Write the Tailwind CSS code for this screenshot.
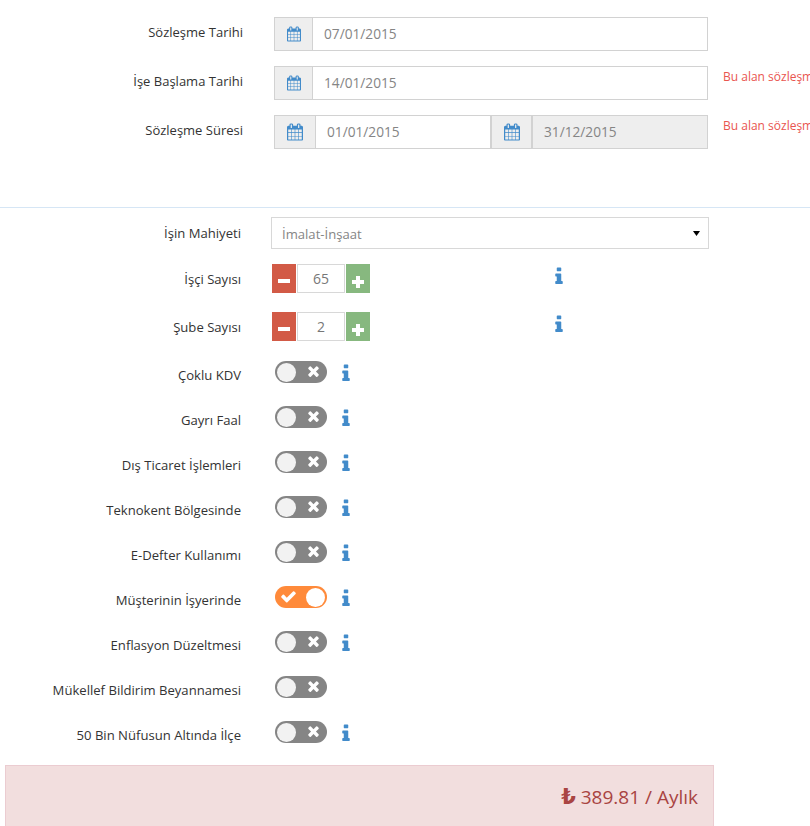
<!DOCTYPE html>
<html lang="tr">
<head>
    <meta charset="UTF-8">
    <title>Sözleşme</title>
    <script src="https://cdn.jsdelivr.net/npm/@tailwindcss/browser@4"></script>
</head>
<body class="bg-white overflow-hidden h-[826px] font-['Open_Sans',sans-serif] text-[13px] text-[#333]">
    <svg class="hidden">
        <symbol id="cal" viewBox="0 0 1664 1792"><path d="M128 1664h288v-288h-288v288zm352 0h320v-288h-320v288zm-352-352h288v-320h-288v320zm352 0h320v-320h-320v320zm-352-384h288v-288h-288v288zm736 736h320v-288h-320v288zm-384-736h320v-288h-320v288zm768 736h288v-288h-288v288zm-384-352h320v-320h-320v320zm-352-864v-288q0-13-9.5-22.5t-22.5-9.5h-64q-13 0-22.5 9.5t-9.5 22.5v288q0 13 9.5 22.5t22.5 9.5h64q13 0 22.5-9.5t9.5-22.5zm736 864h288v-320h-288v320zm-384-384h320v-288h-320v288zm384 0h288v-288h-288v288zm32-480v-288q0-13-9.5-22.5t-22.5-9.5h-64q-13 0-22.5 9.5t-9.5 22.5v288q0 13 9.5 22.5t22.5 9.5h64q13 0 22.5-9.5t9.5-22.5zm384-64v1280q0 52-38 90t-90 38h-1408q-52 0-90-38t-38-90v-1280q0-52 38-90t90-38h128v-96q0-66 47-113t113-47h64q66 0 113 47t47 113v96h384v-96q0-66 47-113t113-47h64q66 0 113 47t47 113v96h128q52 0 90 38t38 90z"/></symbol>
        <symbol id="info" viewBox="0 0 640 1792"><path d="M640 1344v128q0 26-19 45t-45 19h-512q-26 0-45-19t-19-45v-128q0-26 19-45t45-19h64v-384h-64q-26 0-45-19t-19-45v-128q0-26 19-45t45-19h384q26 0 45 19t19 45v576h64q26 0 45 19t19 45zm-128-1152v192q0 26-19 45t-45 19h-256q-26 0-45-19t-19-45v-192q0-26 19-45t45-19h256q26 0 45 19t19 45z"/></symbol>
        <symbol id="check" viewBox="0 0 1792 1792"><path d="M1671 566q0 40-28 68l-724 724-136 136q-28 28-68 28t-68-28l-136-136-362-362q-28-28-28-68t28-68l136-136q28-28 68-28t68 28l294 295 656-657q28-28 68-28t68 28l136 136q28 28 28 68z"/></symbol>
        <symbol id="times" viewBox="0 0 1408 1792"><path d="M1298 1322q0 40-28 68l-136 136q-28 28-68 28t-68-28l-294-294-294 294q-28 28-68 28t-68-28l-136-136q-28-28-28-68t28-68l294-294-294-294q-28-28-28-68t28-68l136-136q28-28 68-28t68 28l294 294 294-294q28-28 68-28t68 28l136 136q28 28 28 68t-28 68l-294 294 294 294q28 28 28 68z"/></symbol>
    </svg>

    <!-- Tarih alanlari -->
    <div class="flex flex-col gap-[15px] pt-[17px] h-[207px]">
        <div class="flex h-[34px]">
            <div class="w-[243px] shrink-0 text-right pt-[6px] whitespace-nowrap">Sözleşme Tarihi</div>
            <div class="ml-[31px] w-[434px] shrink-0 flex border border-[#d2d2d2] h-[34px] bg-white text-[#858585]">
                <span class="w-[38px] bg-[#eeeeee] border-r border-[#d2d2d2] flex items-center justify-center"><svg class="w-[14px] h-[16px] fill-[#428bca]"><use href="#cal"/></svg></span>
                <span class="pl-[11px] pt-[6px] text-[13.7px] leading-[20px]">07/01/2015</span>
            </div>
        </div>
        <div class="flex h-[34px]">
            <div class="w-[243px] shrink-0 text-right pt-[6px] whitespace-nowrap">İşe Başlama Tarihi</div>
            <div class="ml-[31px] w-[434px] shrink-0 flex border border-[#d2d2d2] h-[34px] bg-white text-[#858585]">
                <span class="w-[38px] bg-[#eeeeee] border-r border-[#d2d2d2] flex items-center justify-center"><svg class="w-[14px] h-[16px] fill-[#428bca]"><use href="#cal"/></svg></span>
                <span class="pl-[11px] pt-[6px] text-[13.7px] leading-[20px]">14/01/2015</span>
            </div>
            <div class="ml-[15px] pt-[1px] text-[12px] leading-[20px] text-[#e9554f] whitespace-nowrap">Bu alan sözleşme tarihinden büyük olmalıdır</div>
        </div>
        <div class="flex h-[34px]">
            <div class="w-[243px] shrink-0 text-right pt-[6px] whitespace-nowrap">Sözleşme Süresi</div>
            <div class="ml-[31px] w-[434px] shrink-0 flex border border-[#d2d2d2] h-[34px] bg-white text-[#858585]">
                <span class="w-[41px] bg-[#eeeeee] border-r border-[#d2d2d2] flex items-center justify-center"><svg class="w-[16px] h-[18px] fill-[#428bca]"><use href="#cal"/></svg></span>
                <span class="w-[174px] pl-[11px] pt-[6px] text-[13.7px] leading-[20px]">01/01/2015</span>
                <span class="w-[43px] bg-[#eeeeee] border-x-2 border-[#d2d2d2] flex items-center justify-center"><svg class="w-[16px] h-[18px] fill-[#428bca]"><use href="#cal"/></svg></span>
                <span class="flex-1 bg-[#eeeeee] pl-[11px] pt-[6px] text-[13.7px] leading-[20px]">31/12/2015</span>
            </div>
            <div class="ml-[15px] pt-[1px] text-[12px] leading-[20px] text-[#e9554f] whitespace-nowrap">Bu alan sözleşme bitiş tarihinden küçük olmalıdır</div>
        </div>
    </div>

    <div class="border-t border-[#d6e6f5]"></div>

    <!-- Secimler -->
    <div class="pt-[9px] flex flex-col text-[13.1px]">
        <div class="flex h-[32px]">
            <div class="w-[241px] text-right pt-[7px]">İşin Mahiyeti</div>
            <div class="ml-[30px] w-[438px] h-[32px] border border-[#d8d8d8] flex items-center justify-between pl-[10px] pr-[8px] text-[#858585]">
                <span class="pt-[3px]">İmalat-İnşaat</span>
                <svg class="w-[7px] h-[5px] fill-black" viewBox="0 0 7 5"><path d="M0 0h7L3.5 5z"/></svg>
            </div>
        </div>

        <div class="flex h-[29px] mt-[15px]">
            <div class="w-[241px] text-right pt-[6px]">İşçi Sayısı</div>
            <div class="ml-[31px] flex w-[98px]">
                <span class="w-[24px] bg-[#d25a46] flex items-center justify-center pt-[5px]"><span class="w-[12px] h-[4px] bg-white"></span></span>
                <span class="ml-[1px] w-[48px] border border-[#d8d8d8] text-center text-[14px] text-[#777] leading-[27px]">65</span>
                <span class="ml-[1px] w-[24px] bg-[#87b87f] relative">
                    <span class="absolute left-[6px] top-[16px] w-[12px] h-[4px] bg-white"></span>
                    <span class="absolute left-[10px] top-[12px] w-[4px] h-[12px] bg-white"></span>
                </span>
            </div>
            <svg class="ml-[185px] mt-[2px] w-[8px] h-[21px] fill-[#428bca]"><use href="#info"/></svg>
        </div>

        <div class="flex h-[29px] mt-[19px]">
            <div class="w-[241px] text-right pt-[6px]">Şube Sayısı</div>
            <div class="ml-[31px] flex w-[98px]">
                <span class="w-[24px] bg-[#d25a46] flex items-center justify-center pt-[5px]"><span class="w-[12px] h-[4px] bg-white"></span></span>
                <span class="ml-[1px] w-[48px] border border-[#d8d8d8] text-center text-[14px] text-[#777] leading-[27px]">2</span>
                <span class="ml-[1px] w-[24px] bg-[#87b87f] relative">
                    <span class="absolute left-[6px] top-[16px] w-[12px] h-[4px] bg-white"></span>
                    <span class="absolute left-[10px] top-[12px] w-[4px] h-[12px] bg-white"></span>
                </span>
            </div>
            <svg class="ml-[185px] mt-[2px] w-[8px] h-[21px] fill-[#428bca]"><use href="#info"/></svg>
        </div>

        <!-- Anahtarlar -->
        <div class="flex h-[22px] mt-[20px]">
            <div class="w-[241px] text-right pt-[5px]">Çoklu KDV</div>
            <div class="ml-[34px] w-[52px] h-[22px] rounded-full bg-[#858585] flex items-center justify-between pl-[2px] pr-[7px]">
                <span class="w-[19px] h-[19px] rounded-full bg-[#f2f2f2]"></span>
                <svg class="w-[13px] h-[16px] mb-[2px] fill-white"><use href="#times"/></svg>
            </div>
            <svg class="ml-[15px] mt-[2px] w-[8px] h-[21px] fill-[#428bca]"><use href="#info"/></svg>
        </div>
        <div class="flex h-[22px] mt-[23px]">
            <div class="w-[241px] text-right pt-[5px]">Gayrı Faal</div>
            <div class="ml-[34px] w-[52px] h-[22px] rounded-full bg-[#858585] flex items-center justify-between pl-[2px] pr-[7px]">
                <span class="w-[19px] h-[19px] rounded-full bg-[#f2f2f2]"></span>
                <svg class="w-[13px] h-[16px] mb-[2px] fill-white"><use href="#times"/></svg>
            </div>
            <svg class="ml-[15px] mt-[2px] w-[8px] h-[21px] fill-[#428bca]"><use href="#info"/></svg>
        </div>
        <div class="flex h-[22px] mt-[23px]">
            <div class="w-[241px] text-right pt-[5px]">Dış Ticaret İşlemleri</div>
            <div class="ml-[34px] w-[52px] h-[22px] rounded-full bg-[#858585] flex items-center justify-between pl-[2px] pr-[7px]">
                <span class="w-[19px] h-[19px] rounded-full bg-[#f2f2f2]"></span>
                <svg class="w-[13px] h-[16px] mb-[2px] fill-white"><use href="#times"/></svg>
            </div>
            <svg class="ml-[15px] mt-[2px] w-[8px] h-[21px] fill-[#428bca]"><use href="#info"/></svg>
        </div>
        <div class="flex h-[22px] mt-[23px]">
            <div class="w-[241px] text-right pt-[5px]">Teknokent Bölgesinde</div>
            <div class="ml-[34px] w-[52px] h-[22px] rounded-full bg-[#858585] flex items-center justify-between pl-[2px] pr-[7px]">
                <span class="w-[19px] h-[19px] rounded-full bg-[#f2f2f2]"></span>
                <svg class="w-[13px] h-[16px] mb-[2px] fill-white"><use href="#times"/></svg>
            </div>
            <svg class="ml-[15px] mt-[2px] w-[8px] h-[21px] fill-[#428bca]"><use href="#info"/></svg>
        </div>
        <div class="flex h-[22px] mt-[23px]">
            <div class="w-[241px] text-right pt-[5px]">E-Defter Kullanımı</div>
            <div class="ml-[34px] w-[52px] h-[22px] rounded-full bg-[#858585] flex items-center justify-between pl-[2px] pr-[7px]">
                <span class="w-[19px] h-[19px] rounded-full bg-[#f2f2f2]"></span>
                <svg class="w-[13px] h-[16px] mb-[2px] fill-white"><use href="#times"/></svg>
            </div>
            <svg class="ml-[15px] mt-[2px] w-[8px] h-[21px] fill-[#428bca]"><use href="#info"/></svg>
        </div>
        <div class="flex h-[22px] mt-[23px]">
            <div class="w-[241px] text-right pt-[5px]">Müşterinin İşyerinde</div>
            <div class="ml-[34px] w-[52px] h-[22px] rounded-full bg-[#ff8a3a] flex items-center justify-between pl-[5px] pr-[2px]">
                <svg class="w-[17px] h-[17px] mb-[2px] fill-white"><use href="#check"/></svg>
                <span class="w-[19px] h-[19px] rounded-full bg-white"></span>
            </div>
            <svg class="ml-[15px] mt-[2px] w-[8px] h-[21px] fill-[#428bca]"><use href="#info"/></svg>
        </div>
        <div class="flex h-[22px] mt-[23px]">
            <div class="w-[241px] text-right pt-[5px]">Enflasyon Düzeltmesi</div>
            <div class="ml-[34px] w-[52px] h-[22px] rounded-full bg-[#858585] flex items-center justify-between pl-[2px] pr-[7px]">
                <span class="w-[19px] h-[19px] rounded-full bg-[#f2f2f2]"></span>
                <svg class="w-[13px] h-[16px] mb-[2px] fill-white"><use href="#times"/></svg>
            </div>
            <svg class="ml-[15px] mt-[2px] w-[8px] h-[21px] fill-[#428bca]"><use href="#info"/></svg>
        </div>
        <div class="flex h-[22px] mt-[23px]">
            <div class="w-[241px] text-right pt-[5px]">Mükellef Bildirim Beyannamesi</div>
            <div class="ml-[34px] w-[52px] h-[22px] rounded-full bg-[#858585] flex items-center justify-between pl-[2px] pr-[7px]">
                <span class="w-[19px] h-[19px] rounded-full bg-[#f2f2f2]"></span>
                <svg class="w-[13px] h-[16px] mb-[2px] fill-white"><use href="#times"/></svg>
            </div>
        </div>
        <div class="flex h-[22px] mt-[23px]">
            <div class="w-[241px] text-right pt-[5px]">50 Bin Nüfusun Altında İlçe</div>
            <div class="ml-[34px] w-[52px] h-[22px] rounded-full bg-[#858585] flex items-center justify-between pl-[2px] pr-[7px]">
                <span class="w-[19px] h-[19px] rounded-full bg-[#f2f2f2]"></span>
                <svg class="w-[13px] h-[16px] mb-[2px] fill-white"><use href="#times"/></svg>
            </div>
            <svg class="ml-[15px] mt-[2px] w-[8px] h-[21px] fill-[#428bca]"><use href="#info"/></svg>
        </div>

        <!-- Toplam -->
        <div class="ml-[5px] mt-[22px] w-[709px] h-[70px] bg-[#f2dede] border border-[#ebccd1] text-[#a94442] text-[19px] text-right pr-[15px] pt-[17px] leading-[28px]">
            <span class="font-bold text-[21px] font-['DejaVu_Sans',sans-serif]">₺</span> 389.81 / Aylık
        </div>
    </div>
</body>
</html>
